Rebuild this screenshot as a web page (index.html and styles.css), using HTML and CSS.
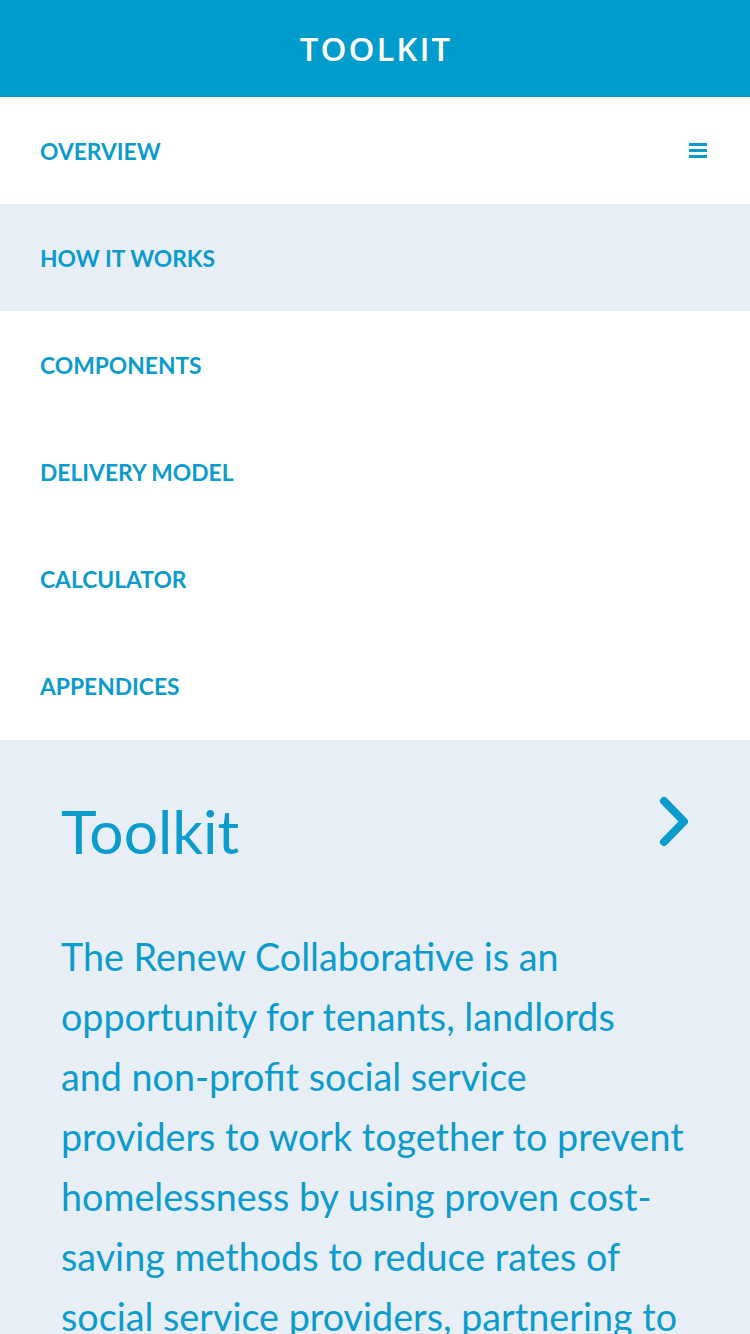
FILE: index.html
```html
<!DOCTYPE html>
<html lang="en">
<head>
<meta charset="utf-8">
<title>Toolkit</title>
<link rel="stylesheet" href="styles.css">
</head>
<body>
<header class="topbar">
  <h1 class="topbar-title">TOOLKIT</h1>
</header>
<nav class="menu">
  <a class="menu-item" href="#">
    <span>OVERVIEW</span>
    <svg class="burger" width="18" height="15" viewBox="0 0 18 15" aria-hidden="true">
      <rect x="0" y="0" width="18" height="3" fill="#0b9bcc"/>
      <rect x="0" y="6" width="18" height="3" fill="#0b9bcc"/>
      <rect x="0" y="12" width="18" height="3" fill="#0b9bcc"/>
    </svg>
  </a>
  <a class="menu-item active" href="#"><span>HOW IT WORKS</span></a>
  <a class="menu-item" href="#"><span>COMPONENTS</span></a>
  <a class="menu-item" href="#"><span>DELIVERY MODEL</span></a>
  <a class="menu-item" href="#"><span>CALCULATOR</span></a>
  <a class="menu-item" href="#"><span>APPENDICES</span></a>
</nav>
<main class="content">
  <div class="content-head">
    <h2 class="content-title">Toolkit</h2>
    <svg class="chevron" width="36" height="54" viewBox="0 0 36 54" aria-hidden="true">
      <path d="M7 6 L27 26.5 L7 47" fill="none" stroke="#0b9bcc" stroke-width="8" stroke-linecap="round" stroke-linejoin="round"/>
    </svg>
  </div>
  <p class="content-text">The Renew Collaborative is an<br>opportunity for tenants, landlords<br>and non-profit social service<br>providers to work together to prevent<br>homelessness by using proven cost-<br>saving methods to reduce rates of<br>social service providers, partnering to</p>
</main>
</body>
</html>
```
FILE: styles.css
```css
html, body {
  margin: 0;
  padding: 0;
}
body {
  width: 750px;
  height: 1334px;
  overflow: hidden;
  background: #e7eef6;
  font-family: Lato, "Noto Sans", sans-serif;
  color: #0b9bcc;
}
.topbar {
  height: 97px;
  background: #009ccb;
  display: flex;
  align-items: center;
  justify-content: center;
}
.topbar-title {
  margin: 0;
  font-family: "Open Sans", "Liberation Sans", sans-serif;
  font-weight: 600;
  font-size: 33px;
  letter-spacing: 2px;
  color: #ffffff;
  line-height: 1;
  padding-left: 2px;
}
.menu {
  display: flex;
  flex-direction: column;
  background: #ffffff;
}
.menu-item {
  height: 107.17px;
  display: flex;
  align-items: center;
  justify-content: space-between;
  padding: 0 43px 0 40px;
  font-weight: 700;
  font-size: 22.8px;
  color: #0b9bcc;
  text-decoration: none;
  box-sizing: border-box;
}
.menu-item.active {
  background: #e7eef6;
}
.burger {
  display: block;
}
.content {
  padding: 55px 60px 0 61px;
}
.content-head {
  display: flex;
  justify-content: space-between;
  align-items: flex-start;
}
.content-title {
  margin: 0;
  font-weight: 400;
  font-size: 60.5px;
  line-height: 1.2;
}
.chevron {
  display: block;
  margin-top: 0;
  margin-right: -3px;
}
.content-text {
  margin: 59px 0 0;
  font-size: 37.7px;
  line-height: 60px;
  white-space: nowrap;
}
```
